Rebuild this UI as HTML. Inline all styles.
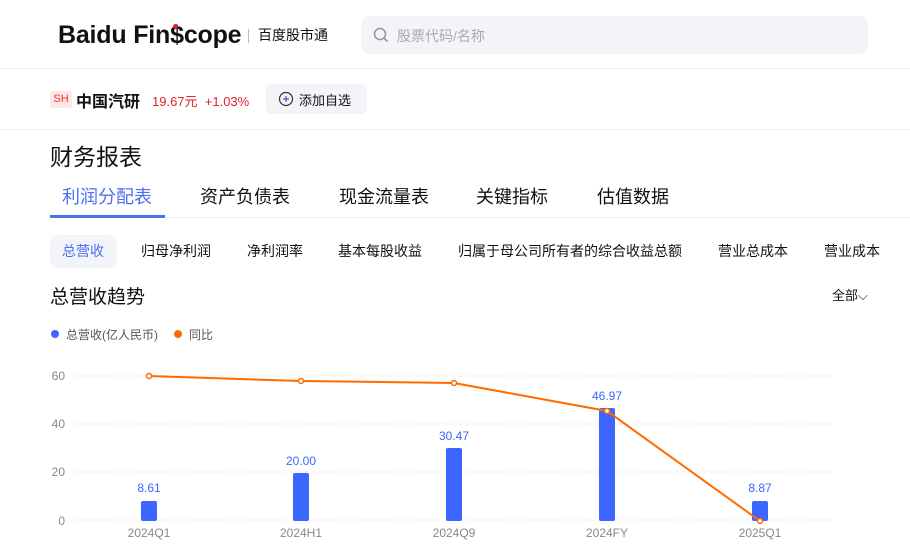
<!DOCTYPE html>
<html><head><meta charset="utf-8"><style>
*{margin:0;padding:0;box-sizing:border-box}
body{width:910px;height:557px;overflow:hidden;background:#fff;font-family:"Liberation Sans","Noto Sans CJK SC",sans-serif;color:#111;position:relative}
.a{position:absolute;white-space:nowrap}
</style></head><body>
<div class="a" style="left:58px;top:20px;font-size:25px;line-height:30px;font-weight:bold;letter-spacing:-0.2px;font-family:'Liberation Sans',sans-serif">Baidu Fin<span style="position:relative">$<span style="position:absolute;left:3px;top:3px;width:5px;height:5px;border-radius:50%;background:#e62020"></span></span>cope</div>
<div class="a" style="left:248px;top:29px;width:1px;height:14px;background:#bbb"></div>
<div class="a" style="left:258px;top:25px;font-size:14px">百度股市通</div>
<div class="a" style="left:361px;top:16px;width:507px;height:38px;border-radius:8px;background:#f3f4f7"></div>
<svg class="a" style="left:373px;top:27px" width="16" height="16"><circle cx="7" cy="7" r="5.5" fill="none" stroke="#999" stroke-width="1.6"/><path d="M11 11l3.5 3.5" stroke="#999" stroke-width="1.6"/></svg>
<div class="a" style="left:397px;top:26px;font-size:14px;color:#aaa">股票代码/名称</div>
<div class="a" style="left:0;top:68px;width:910px;height:1px;background:#eee"></div>
<div class="a" style="left:50px;top:91px;width:22px;height:17px;background:#fde8e8;border-radius:2px;color:#e33;font-size:11px;text-align:center;line-height:17px">SH</div>
<div class="a" style="left:76px;top:88px;font-size:16px;font-weight:bold">中国汽研</div>
<div class="a" style="left:152px;top:91px;font-size:13px;color:#e1232e">19.67元&nbsp; +1.03%</div>
<div class="a" style="left:266px;top:84px;width:101px;height:30px;background:#f3f4f7;border-radius:6px"></div>
<svg class="a" style="left:278px;top:91px" width="16" height="16"><circle cx="8" cy="8" r="6.5" fill="none" stroke="#333" stroke-width="1.2"/><path d="M8 5v6M5 8h6" stroke="#7a3fb0" stroke-width="1.2"/></svg>
<div class="a" style="left:299px;top:90px;font-size:13px">添加自选</div>
<div class="a" style="left:0;top:129px;width:910px;height:1px;background:#eee"></div>
<div class="a" style="left:50px;top:138px;font-size:23px">财务报表</div>
<div class="a" style="left:62px;top:183px;font-size:18px;color:#4e6ef2">利润分配表</div>
<div class="a" style="left:200px;top:183px;font-size:18px">资产负债表</div>
<div class="a" style="left:339px;top:183px;font-size:18px">现金流量表</div>
<div class="a" style="left:476px;top:183px;font-size:18px">关键指标</div>
<div class="a" style="left:597px;top:183px;font-size:18px">估值数据</div>
<div class="a" style="left:50px;top:217px;width:860px;height:1px;background:#eee"></div>
<div class="a" style="left:50px;top:215px;width:115px;height:3px;background:#4e6ef2"></div>
<div class="a" style="left:50px;top:235px;width:67px;height:33px;background:#f3f4f9;border-radius:8px"></div>
<div class="a" style="left:62px;top:241px;font-size:14px;color:#4e6ef2">总营收</div>
<div class="a" style="left:141px;top:241px;font-size:14px">归母净利润</div>
<div class="a" style="left:247px;top:241px;font-size:14px">净利润率</div>
<div class="a" style="left:338px;top:241px;font-size:14px">基本每股收益</div>
<div class="a" style="left:458px;top:241px;font-size:14px">归属于母公司所有者的综合收益总额</div>
<div class="a" style="left:718px;top:241px;font-size:14px">营业总成本</div>
<div class="a" style="left:824px;top:241px;font-size:14px">营业成本</div>
<div class="a" style="left:50px;top:282px;font-size:19px">总营收趋势</div>
<div class="a" style="left:832px;top:285px;font-size:13px">全部⌵</div>
<svg class="a" style="left:0;top:320px" width="910" height="237" font-family="Liberation Sans,sans-serif">
<circle cx="55" cy="14" r="4" fill="#3b66ff"/><text x="66" y="19" font-size="12" fill="#555" font-family="Liberation Sans,Noto Sans CJK SC,sans-serif">总营收(亿人民币)</text>
<circle cx="178" cy="14" r="4" fill="#ff6a00"/><text x="189" y="19" font-size="12" fill="#555" font-family="Liberation Sans,Noto Sans CJK SC,sans-serif">同比</text>
<g stroke="#e8e8e8" stroke-dasharray="4,3"><path d="M73 56H836M73 104H836M73 152H836M73 200H836"/></g>
<g font-size="12" fill="#888" text-anchor="end"><text x="65" y="60">60</text><text x="65" y="108">40</text><text x="65" y="156">20</text><text x="65" y="205">0</text></g>
<g fill="#3b66ff"><rect x="141" y="181" width="16" height="20" rx="2"/><rect x="293" y="153" width="16" height="48" rx="2"/><rect x="446" y="128" width="16" height="73" rx="2"/><rect x="599" y="88" width="16" height="113" rx="2"/><rect x="752" y="181" width="16" height="20" rx="2"/></g>
<g font-size="12" fill="#3b66ff" text-anchor="middle"><text x="149" y="172">8.61</text><text x="301" y="145">20.00</text><text x="454" y="120">30.47</text><text x="607" y="80">46.97</text><text x="760" y="172">8.87</text></g>
<polyline points="149,56 301,61 454,63 607,91 760,201" fill="none" stroke="#ff6a00" stroke-width="2"/>
<g fill="#fff" stroke="#ff6a00" stroke-width="1.5"><circle cx="149" cy="56" r="2.5"/><circle cx="301" cy="61" r="2.5"/><circle cx="454" cy="63" r="2.5"/><circle cx="607" cy="91" r="2.5"/><circle cx="760" cy="201" r="2.5"/></g>
<g font-size="12" fill="#888" text-anchor="middle"><text x="149" y="217">2024Q1</text><text x="301" y="217">2024H1</text><text x="454" y="217">2024Q9</text><text x="607" y="217">2024FY</text><text x="760" y="217">2025Q1</text></g>
</svg>
</body></html>
